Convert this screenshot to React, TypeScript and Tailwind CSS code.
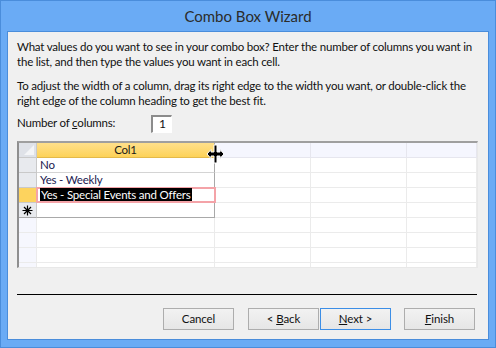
import React from "react";

const emptyCols = [96, 96, 70];

function ResizeCursor() {
  return (
    <svg
      className="absolute left-[198px] top-[112px]"
      width="19"
      height="20"
      viewBox="0 0 19 20"
    >
      <path
        d="M8 1h3v7h3V5.5l4 4.5-4 4.5V12h-3v7H8v-7H5v2.5L1 10l4-4.5V8h3z"
        fill="#000"
        stroke="#fff"
        strokeWidth="1"
      />
    </svg>
  );
}

function NewRowStar() {
  return (
    <svg width="11" height="11" viewBox="0 0 11 11">
      <path
        d="M5.5 0.5v10M0.5 5.5h10M2 2l7 7M9 2l-7 7"
        stroke="#000"
        strokeWidth="1.2"
      />
    </svg>
  );
}

function WizButton({
  children,
  active,
  className,
}: {
  children: React.ReactNode;
  active?: boolean;
  className?: string;
}) {
  return (
    <button
      className={`h-[22px] w-[71px] border bg-gradient-to-b from-[#f2f2f2] to-[#e6e6e6] text-[11.5px] tracking-[-0.1px] text-[#111] ${
        active ? "border-[#3c8ee6]" : "border-[#adadad]"
      } ${className ?? ""}`}
    >
      {children}
    </button>
  );
}

function DataRow({
  text,
  marker,
  selected,
  last,
}: {
  text?: string;
  marker?: "current" | "new";
  selected?: boolean;
  last?: boolean;
}) {
  return (
    <div className="flex h-[15px]">
      <div
        className={`flex w-[18px] items-center justify-center border-r border-b ${
          last ? "border-b-[#a9a9a9]" : "border-b-[#c9c9c9]"
        } border-r-[#c9c9c9] ${
          marker === "current" ? "bg-[#fdd35e]" : "bg-[#e8eaee]"
        }`}
      >
        {marker === "new" && <NewRowStar />}
      </div>
      <div
        className={`relative w-[178px] border-r border-b border-r-[#a9a9a9] ${
          last ? "border-b-[#a9a9a9]" : "border-b-[#d4d4d4]"
        } bg-white pl-[3px] text-[11.5px] leading-[14px] tracking-[-0.2px] text-[#1a1a50]`}
      >
        {selected ? (
          <>
            <div className="pointer-events-none absolute -top-px -left-px h-[16px] w-[180px] border-2 border-[#f4a3a8]" />
            <span className="relative bg-black px-px text-white">{text}</span>
          </>
        ) : (
          text
        )}
      </div>
      {emptyCols.map((w, i) => (
        <div
          key={i}
          style={{ width: w }}
          className="border-r border-b border-[#ebebeb] bg-white"
        />
      ))}
    </div>
  );
}

function EmptyRow() {
  return (
    <div className="flex h-[15px]">
      <div className="w-[18px] border-r border-b border-[#ebebeb] bg-[#f6f7fe]" />
      <div className="w-[178px] border-r border-b border-[#ebebeb] bg-white" />
      {emptyCols.map((w, i) => (
        <div
          key={i}
          style={{ width: w }}
          className="border-r border-b border-[#ebebeb] bg-white"
        />
      ))}
    </div>
  );
}

export default function App() {
  return (
    <div
      className="h-[348px] w-[496px] border border-[#4a8ddb] bg-[#6aabf5] px-[6px] pb-[8px]"
      style={{ fontFamily: 'Lato, "Open Sans", sans-serif' }}
    >
      <div className="flex h-[30px] items-center justify-center text-[15px] text-[#2b2b2b]">
        Combo Box Wizard
      </div>

      <div className="relative h-[309px] border border-[#4a8ddb] bg-[#f0f0f0] px-[9px] pt-[8px] text-[11.5px] leading-[14.5px] tracking-[-0.2px] text-[#111]">
        <p className="whitespace-nowrap">
          What values do you want to see in your combo box? Enter the number of
          columns you want in
          <br />
          the list, and then type the values you want in each cell.
        </p>
        <p className="mt-[10px] whitespace-nowrap">
          To adjust the width of a column, drag its right edge to the width you
          want, or double-click the
          <br />
          right edge of the column heading to get the best fit.
        </p>

        <div className="mt-[7px] flex items-center">
          <span className="w-[134px] pb-[2px]">
            Number of <span className="underline">c</span>olumns:
          </span>
          <div className="flex h-[18px] w-[21px] items-center border-t-2 border-l-2 border-r border-b border-t-[#8c8c8c] border-l-[#8c8c8c] border-r-white border-b-white bg-white pl-[6px] text-[12px]">
            1
          </div>
        </div>

        <div className="mt-[8px] h-[127px] w-[461px] overflow-hidden border-t-2 border-l-2 border-r border-b border-t-[#9f9f9f] border-l-[#8f8f8f] border-r-[#e8e8e8] border-b-[#e8e8e8] bg-white">
          <div className="flex h-[15px]">
            <div className="relative w-[18px] border-r border-b border-[#c9c9c9] bg-[#dfe2e8]">
              <svg className="absolute right-[2px] bottom-[2px]" width="10" height="10">
                <path d="M10 0V10H0z" fill="#f4f5f7" />
              </svg>
            </div>
            <div className="flex w-[178px] items-center justify-center border-r border-b border-r-[#a9a9a9] border-b-[#e3b94a] bg-gradient-to-b from-[#ffe08a] to-[#fdd257] text-[11.5px] text-[#1a1a1a]">
              Col1
            </div>
            {emptyCols.map((w, i) => (
              <div
                key={i}
                style={{ width: w }}
                className="border-r border-b border-[#e6e6ee] bg-[#f5f6fe]"
              />
            ))}
          </div>
          <DataRow text="No" />
          <DataRow text="Yes - Weekly" />
          <DataRow
            text="Yes - Special Events and Offers"
            marker="current"
            selected
          />
          <DataRow marker="new" last />
          <EmptyRow />
          <EmptyRow />
          <EmptyRow />
          <EmptyRow />
        </div>

        <ResizeCursor />

        <div className="mt-[26px] h-px w-[460px] bg-black" />

        <div className="mt-[13px] flex">
          <WizButton className="ml-[146px]">Cancel</WizButton>
          <WizButton className="ml-[14px]">
            &lt; <span className="underline">B</span>ack
          </WizButton>
          <WizButton className="ml-[1px]" active>
            <span className="underline">N</span>ext &gt;
          </WizButton>
          <WizButton className="ml-[13px]">
            <span className="underline">F</span>inish
          </WizButton>
        </div>
      </div>
    </div>
  );
}
